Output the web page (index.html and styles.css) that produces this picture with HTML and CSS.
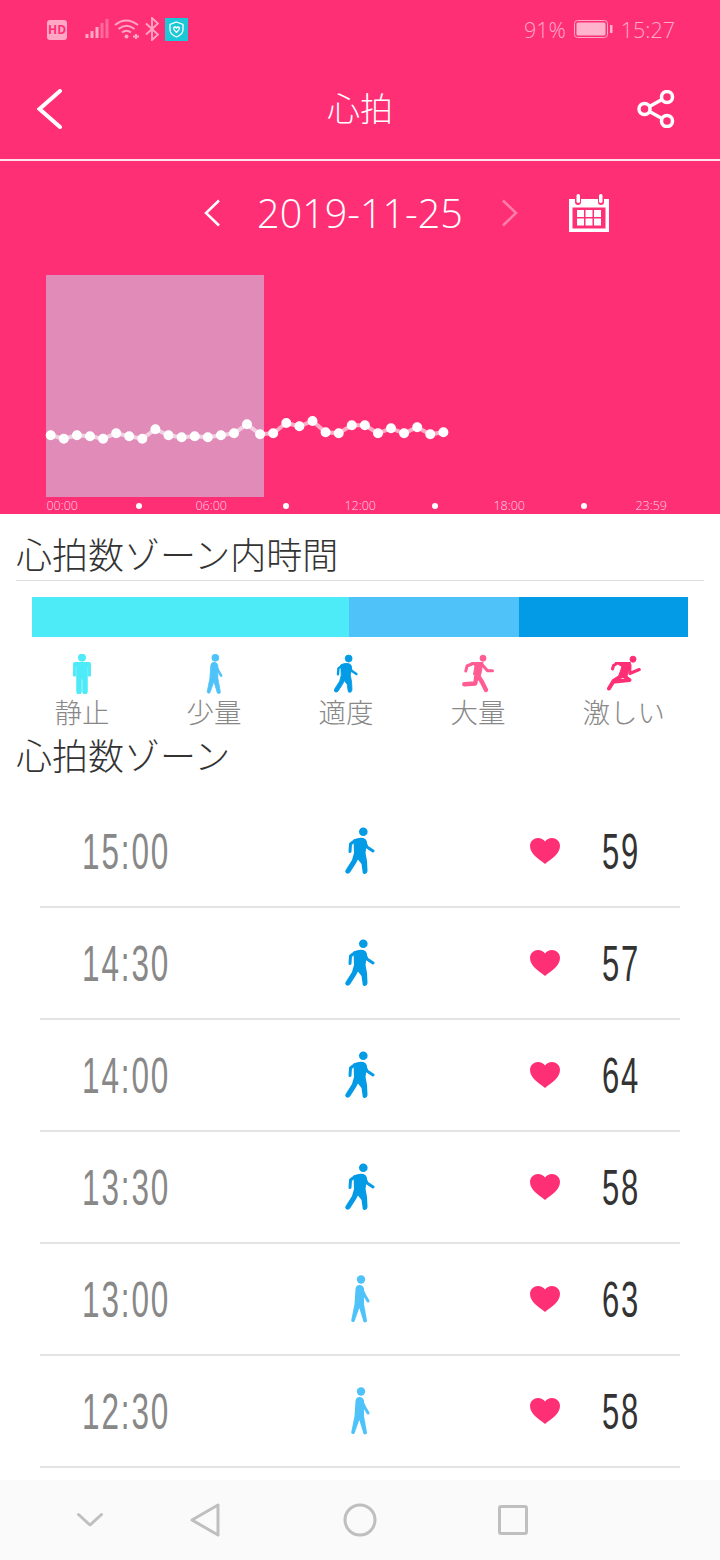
FILE: index.html
```html
<!DOCTYPE html>
<html lang="ja">
  <head>
    <meta charset="UTF-8" />
    <meta name="viewport" content="width=device-width, initial-scale=1.0" />
    <title>心拍</title>
    <link rel="stylesheet" href="styles.css">
  </head>
  <body>
    <svg class="defs" width="0" height="0">
      <symbol id="stand" viewBox="0 0 18 40">
        <circle cx="9" cy="3.6" r="3.6" />
        <path d="M2 8.500h14q1.600 0 1.600 1.600V22h-2.400V12.500h-1V38q0 2-2.200 2T9.800 38V25H8.200V38q0 2-2.200 2T3.800 38V12.500h-1V22H.4V10.100Q.4 8.500 2 8.500z" />
      </symbol>
      <symbol id="slight" viewBox="0 0 20 48">
        <circle cx="11" cy="4.500" r="4.200" />
        <path d="M9.500 10q3.500 0 4.500 3.500L14 29 17 45.500a2 2 0 0 1-3.500 1.300L9.300 33 4.500 46.500A2 2 0 0 1 1.200 45.500L4.500 29 5.500 14q.5-4 4-4z" />
        <path class="limb" stroke-width="3" d="M11.500 13.500l3 6.500 3.500 6" />
      </symbol>
      <symbol id="walk" viewBox="0 0 30 48">
        <circle cx="18.300" cy="4.700" r="4.300" />
        <path d="M8.500 12.500Q14 10 18.500 11 21.500 12 22 15L20.500 26 22 34 22.500 44Q22 47 19.500 47 17.500 47 17.500 44L16.500 37 13 32.500 10.500 37 5 45.500Q3 47.500 1 46-.5 44.500 1 42.500L7 33 9 26z" />
        <g class="limb">
          <path stroke-width="3" d="M9.500 14L5.500 17 5 24.500" />
          <path stroke-width="3" d="M19.500 14l2.500 6 6 4" />
        </g>
      </symbol>
      <symbol id="run" viewBox="0 0 32 38">
        <circle cx="21" cy="3.200" r="3" />
        <path d="M9.500 7.500H21l-2.500 13-7-1 1.500-8.500z" />
        <g class="limb">
          <path stroke-width="3" d="M10 9L5 11l-1.200 5" />
          <path stroke-width="3" d="M20 9.500l5.500 6.300h5" />
          <path stroke-width="4.400" d="M14.500 20l-1.200 8.500-11 .8" />
          <path stroke-width="4.400" d="M15.500 20l4.500 7 4 8" />
        </g>
      </symbol>
      <symbol id="sprint" viewBox="0 0 34 36">
        <circle cx="26" cy="3.200" r="3" />
        <path d="M8 6.500h15.500L19.500 22l-8-1.500 3.500-10z" />
        <g class="limb">
          <path stroke-width="3" d="M9 8L6.500 9.500 5.500 13" />
          <path stroke-width="3" d="M23 9l-.2 8.500 9.500-4" />
          <path stroke-width="4" d="M14.500 20l-8 5L2 32.500" />
          <path stroke-width="4" d="M17 20l5.500 4L8 25.500" />
        </g>
      </symbol>
      <symbol id="heart" viewBox="0 0 30 26">
        <path d="M15 26C9 21 0 16 0 8 0 3 4 0 8 0q4.500 0 7 3.500Q17.500 0 22 0c4 0 8 3 8 8 0 8-9 13-15 18z" />
      </symbol>
    </svg>

    <div class="top">
      <div class="status">
        <span class="hd">HD</span>
        <svg class="signal" width="24" height="22" viewBox="0 0 24 22">
          <path class="on" d="M2 16v4M7 13v7M12 9v11" />
          <path class="off" d="M17 5v15M22 1v19" />
        </svg>
        <svg class="wifi" width="26" height="22" viewBox="0 0 26 22">
          <path d="M1 7q11-9 23 0M4.500 11q8-6.500 16 0M8 14.500q4.500-3.500 9 0" />
          <circle cx="12.500" cy="18.500" r="2" />
          <path d="M19 18.500h6M22 16v5" />
        </svg>
        <svg class="bt" width="14" height="24" viewBox="0 0 14 24">
          <path d="M1 6.500l12 11L7 23V1l6 5.500-12 11" />
        </svg>
        <svg class="guard" width="23" height="23" viewBox="0 0 23 23">
          <rect width="23" height="23" fill="#1ac8d8" />
          <path d="M11.500 4l6.500 2.500v5q0 5-6.500 7.500Q5 16.500 5 11.500v-5z" />
          <path d="M8.500 10q1.500-2 3 0 1.500-2 3 0 0 2-3 4.500-3-2.500-3-4.500z" />
        </svg>
        <span class="status-right">
          <span>91%</span>
          <svg class="battery" width="39" height="20" viewBox="0 0 39 20">
            <rect class="battery-box" x=".5" y="1.500" width="33" height="17" rx="3" />
            <rect class="battery-fill" x="2.500" y="3.500" width="29" height="13" rx="1.500" />
            <rect class="battery-fill" x="36" y="6" width="2.500" height="8" />
          </svg>
          <span>15:27</span>
        </span>
      </div>

      <header class="title-bar">
        <svg class="back" width="26" height="40" viewBox="0 0 26 40">
          <path d="M23 2L2.500 20 23 38" />
        </svg>
        <h1>心拍</h1>
        <svg class="share" width="38" height="38" viewBox="0 0 38 38">
          <circle cx="7.500" cy="19" r="5.500" />
          <circle cx="30" cy="7" r="5.500" />
          <circle cx="30" cy="31" r="5.500" />
          <path d="M12.500 16.500L25 9.500M12.500 21.500L25 28.500" />
        </svg>
      </header>

      <div class="date-row">
        <span class="date-prev">
          <svg class="chev" width="18" height="28" viewBox="0 0 18 28"><path d="M16 1.500L3 14l13 12.500" /></svg>
        </span>
        <span class="date">2019-11-25</span>
        <span class="date-next">
          <svg class="chev dim" width="18" height="28" viewBox="0 0 18 28"><path d="M2 1.500L15 14 2 26.500" /></svg>
          <svg class="calendar" width="40" height="38" viewBox="0 0 40 38">
            <path d="M0 5h6v3q0 3 3 3t3-3V5h17v3q0 3 3 3t3-3V5h5v33H0zM3.500 13.500v21h33v-21z" />
            <rect x="7.500" y="0" width="3.500" height="9" rx="1.700" />
            <rect x="30" y="0" width="3.500" height="9" rx="1.700" />
            <path d="M8 16h7v7H8zM16.500 16h7v7h-7zM25 16h7v7h-7zM8 24.500h7v7H8zM16.500 24.500h7v7h-7zM25 24.500h7v7h-7z" />
          </svg>
        </span>
      </div>

      <svg class="chart" width="720" height="222" viewBox="0 275 720 222">
        <rect class="chart-range" x="46" y="275" width="218" height="222" />
        <path class="chart-line" d="M50.700 435.300L63.800 438.700 76.900 435.300 90 436.300 103.100 438.700 116.200 433.300 129.200 436.300 142.300 438.700 155.400 429.300 168.500 435.300 181.600 437.300 194.700 436.300 207.800 437.300 220.900 435.300 234 433.300 247 424.300 260.100 434.300 273.200 433.300 286.300 423 299.400 426.300 312.500 421 325.600 432.300 338.700 433.300 351.800 425.300 364.900 425.300 378 433.300 391 428.300 404.100 433.300 417.200 427.300 430.300 434.300 443.400 432.300" />
        <path class="chart-dots" d="M50.700 435.300h0M63.800 438.700h0M76.900 435.300h0M90 436.300h0M103.100 438.700h0M116.200 433.300h0M129.200 436.300h0M142.300 438.700h0M155.400 429.300h0M168.500 435.300h0M181.600 437.300h0M194.700 436.300h0M207.800 437.300h0M220.900 435.300h0M234 433.300h0M247 424.300h0M260.100 434.300h0M273.200 433.300h0M286.300 423h0M299.400 426.300h0M312.500 421h0M325.600 432.300h0M338.700 433.300h0M351.800 425.300h0M364.900 425.300h0M378 433.300h0M391 428.300h0M404.100 433.300h0M417.200 427.300h0M430.300 434.300h0M443.400 432.300h0" />
      </svg>

      <div class="axis">
        <span>00:00</span><i></i><span>06:00</span><i></i><span>12:00</span><i></i><span>18:00</span><i></i><span>23:59</span>
      </div>
    </div>

    <main class="content">
      <h2 class="section-title underlined">心拍数ゾーン内時間</h2>

      <div class="zone-bar">
        <div class="zone-rest"></div>
        <div class="zone-light"></div>
        <div class="zone-mid"></div>
      </div>

      <div class="legend">
        <div class="legend-item"><svg class="c-rest" width="18" height="40"><use href="#stand" /></svg>静止</div>
        <div class="legend-item"><svg class="c-light" width="17" height="40"><use href="#slight" /></svg>少量</div>
        <div class="legend-item"><svg class="c-mid" width="24" height="39"><use href="#walk" /></svg>適度</div>
        <div class="legend-item"><svg class="c-high" width="32" height="38"><use href="#run" /></svg>大量</div>
        <div class="legend-item"><svg class="c-max" width="34" height="36"><use href="#sprint" /></svg>激しい</div>
      </div>

      <h2 class="section-title">心拍数ゾーン</h2>

      <ul class="records">
        <li><span class="time"><b>15:00</b></span><svg class="c-mid" width="30" height="48"><use href="#walk" /></svg><svg class="heart" width="30" height="26"><use href="#heart" /></svg><span class="bpm"><b>59</b></span></li>
        <li><span class="time"><b>14:30</b></span><svg class="c-mid" width="30" height="48"><use href="#walk" /></svg><svg class="heart" width="30" height="26"><use href="#heart" /></svg><span class="bpm"><b>57</b></span></li>
        <li><span class="time"><b>14:00</b></span><svg class="c-mid" width="30" height="48"><use href="#walk" /></svg><svg class="heart" width="30" height="26"><use href="#heart" /></svg><span class="bpm"><b>64</b></span></li>
        <li><span class="time"><b>13:30</b></span><svg class="c-mid" width="30" height="48"><use href="#walk" /></svg><svg class="heart" width="30" height="26"><use href="#heart" /></svg><span class="bpm"><b>58</b></span></li>
        <li><span class="time"><b>13:00</b></span><svg class="c-light" width="20" height="48"><use href="#slight" /></svg><svg class="heart" width="30" height="26"><use href="#heart" /></svg><span class="bpm"><b>63</b></span></li>
        <li><span class="time"><b>12:30</b></span><svg class="c-light" width="20" height="48"><use href="#slight" /></svg><svg class="heart" width="30" height="26"><use href="#heart" /></svg><span class="bpm"><b>58</b></span></li>
      </ul>
    </main>

    <nav class="nav-bar">
      <svg width="28" height="16" viewBox="0 0 28 16"><path d="M2.500 2.500L14 13 25.500 2.500" /></svg>
      <svg class="nav-back" width="30" height="34" viewBox="0 0 30 34"><path d="M28 2v30L2 17z" /></svg>
      <svg class="nav-home" width="34" height="34" viewBox="0 0 34 34"><circle cx="17" cy="17" r="15" /></svg>
      <svg class="nav-recent" width="30" height="30" viewBox="0 0 30 30"><rect x="1.500" y="1.500" width="27" height="27" rx="1.500" /></svg>
    </nav>
  </body>
</html>
```

FILE: styles.css
```css
* {
  box-sizing: border-box;
}

body {
  margin: 0;
  width: 720px;
  height: 1560px;
  display: flex;
  flex-direction: column;
  overflow: hidden;
  background-color: #fff;
  font-family: "Noto Sans CJK JP", "Open Sans", sans-serif;
}

svg {
  display: block;
}

.defs {
  position: absolute;
}

/* pink top part */

.top {
  background-color: #ff2f76;
  height: 514px;
  flex: none;
}

.status {
  height: 60px;
  padding: 17px 45px 0 47px;
  display: flex;
  align-items: flex-start;
  color: #ffabc8;
  font-family: "Open Sans", sans-serif;
  font-weight: 300;
  font-size: 21.500px;
}

.hd {
  width: 20px;
  height: 20px;
  margin-top: 3px;
  border-radius: 3px;
  background-color: #ffa8c6;
  color: #ff2f76;
  font-size: 12px;
  font-weight: 700;
  line-height: 20px;
  text-align: center;
}

.signal {
  margin: 1px 0 0 18px;
}

.signal path {
  fill: none;
  stroke-width: 3;
}

.signal .on {
  stroke: #ffa8c6;
}

.signal .off {
  stroke: #ff6a9c;
}

.wifi {
  margin: 1px 0 0 5px;
  fill: #ffa8c6;
}

.wifi path {
  fill: none;
  stroke: #ffa8c6;
  stroke-width: 2;
}

.bt {
  margin-left: 5px;
  fill: none;
  stroke: #ffa8c6;
  stroke-width: 1.800;
}

.guard {
  margin: 1px 0 0 6px;
}

.guard path {
  fill: none;
  stroke: #fff;
  stroke-width: 1.300;
}

.status-right {
  margin-left: auto;
  display: flex;
  align-items: center;
  gap: 8px;
  height: 24px;
}

.battery-box {
  fill: none;
  stroke: #ffa8c6;
}

.battery-fill {
  fill: #ffb3cd;
}

.title-bar {
  height: 101px;
  padding: 0 45px 2px;
  display: grid;
  grid-template-columns: 1fr auto 1fr;
  align-items: center;
  border-bottom: 2px solid #ffe3ec;
  color: #fff;
}

.title-bar h1 {
  margin: -4px 0 0;
  font-size: 33px;
  font-weight: 300;
}

.back {
  margin-left: -8px;
  fill: none;
  stroke: #fff;
  stroke-width: 4;
  stroke-linecap: round;
}

.share {
  justify-self: end;
  fill: none;
  stroke: #fff;
  stroke-width: 3.500;
}

.date-row {
  height: 104px;
  margin-bottom: 10px;
  display: grid;
  grid-template-columns: 1fr auto 1fr;
  align-items: center;
  color: #fff;
}

.date {
  font-family: "Open Sans", sans-serif;
  font-weight: 300;
  font-size: 39.500px;
}

.date-prev {
  justify-self: end;
  margin-right: 36px;
}

.date-next {
  display: flex;
  align-items: center;
  margin-left: 38px;
  gap: 50px;
}

.chev {
  fill: none;
  stroke: #fff;
  stroke-width: 2.500;
}

.chev.dim {
  stroke: #ff7ea9;
}

.calendar {
  fill: #fff;
  fill-rule: evenodd;
}

.chart {
  width: 720px;
  height: 222px;
}

.chart-range {
  fill: #e18bb8;
}

.chart-line {
  fill: none;
  stroke: #fff;
  stroke-opacity: 0.6;
  stroke-width: 4;
}

.chart-dots {
  fill: none;
  stroke: #fff;
  stroke-width: 10;
  stroke-linecap: round;
}

.axis {
  height: 17px;
  padding-left: 25px;
  display: grid;
  grid-template-columns: repeat(9, 74.500px);
  justify-items: center;
  align-items: center;
  color: #ffd2e1;
  font-family: "Open Sans", sans-serif;
  font-weight: 300;
  font-size: 12.500px;
}

.axis i {
  width: 6px;
  height: 6px;
  border-radius: 50%;
  background-color: #fff;
}

.axis i:first-of-type {
  margin-left: 4px;
}

.axis span:last-child {
  margin-right: 14px;
}

/* white part */

.content {
  flex: 1;
  overflow: hidden;
}

.section-title {
  margin: 0 16px;
  font-size: 36px;
  font-weight: 300;
  color: #333;
}

.section-title.underlined {
  height: 67px;
  padding-top: 16px;
  line-height: 47px;
  border-bottom: 1px solid #ddd;
}

.zone-bar {
  height: 40px;
  margin: 16px 32px 0;
  display: flex;
}

.zone-rest {
  width: 317px;
  background-color: #4debf7;
}

.zone-light {
  width: 170px;
  background-color: #4fc3f9;
}

.zone-mid {
  flex: 1;
  background-color: #039be5;
}

.legend {
  margin-top: 17px;
  padding-left: 54.500px;
  display: flex;
  gap: 77px;
  height: 76px;
}

.legend-item {
  display: flex;
  flex-direction: column;
  align-items: center;
  color: #888;
  font-size: 27.500px;
  font-weight: 300;
  line-height: 34px;
}

.legend-item svg {
  height: 40px;
  flex: none;
}

.legend + .section-title {
  line-height: 48px;
  height: 50px;
}

.c-rest { fill: #4debf7; stroke: #4debf7; }
.c-light { fill: #4fc3f9; stroke: #4fc3f9; }
.c-mid { fill: #039be5; stroke: #039be5; }
.c-high { fill: #ff5c93; stroke: #ff5c93; }
.c-max { fill: #ff2f76; stroke: #ff2f76; }

.limb {
  fill: none;
  stroke-linecap: round;
  stroke-linejoin: round;
}

.records {
  list-style: none;
  margin: 16px 40px 0;
  padding: 0;
}

.records li {
  height: 112px;
  display: grid;
  grid-template-columns: 280px 80px 130px 30px 42px 1fr;
  align-items: center;
  justify-items: center;
  border-bottom: 2px solid #e4e4e4;
}

.records .heart {
  grid-column: 4;
  fill: #ff2f76;
  stroke: none;
}

.records li > svg:not(.heart) {
  stroke-width: 0;
}

.time,
.bpm {
  font-family: "Liberation Sans Narrow", "Liberation Sans", sans-serif;
  font-size: 50px;
  line-height: 60px;
  padding-top: 2px;
  letter-spacing: 3px;
}

.time b,
.bpm b {
  display: inline-block;
  font-weight: 400;
  transform-origin: left center;
}

.time b {
  transform: scaleX(0.63);
}

.bpm b {
  transform: scaleX(0.62);
}

.time {
  justify-self: start;
  padding-left: 42px;
  color: #888;
}

.bpm {
  grid-column: 6;
  justify-self: start;
  color: #333;
}

.nav-bar {
  height: 80px;
  flex: none;
  padding-left: 76px;
  display: flex;
  align-items: center;
  background-color: #fafafa;
}

.nav-back {
  margin-left: 86px;
}

.nav-home {
  margin-left: 123px;
}

.nav-recent {
  margin-left: 121px;
}

.nav-bar svg {
  fill: none;
  stroke: #bfbfbf;
  stroke-width: 3;
  stroke-linejoin: round;
  stroke-linecap: round;
}
```
